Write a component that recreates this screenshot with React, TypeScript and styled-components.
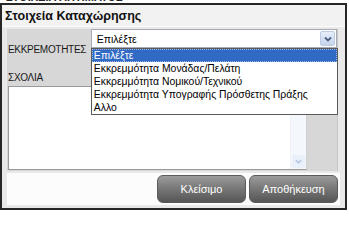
import React from "react"
import styled, { createGlobalStyle } from "styled-components"

const GlobalStyle = createGlobalStyle`
  html, body {
    margin: 0;
    padding: 0;
    background: #ffffff;
  }
  body {
    font-family: "Liberation Sans", Arial, sans-serif;
    font-size: 11px;
    color: #000;
  }
`

const Page = styled.div`
  width: 349px;
  height: 212px;
  overflow: hidden;
  background: #ffffff;
`

const BehindStrip = styled.div`
  height: 3px;
  overflow: hidden;
  padding-left: 6px;
  font-size: 11px;
  font-weight: bold;
  color: #222;
  line-height: 12px;

  & > span {
    display: block;
    margin-top: -9px;
  }
`

const Dialog = styled.div`
  width: 343px;
  height: 203px;
  border: 2px solid #262626;
  background: #e9e9e9;
  display: flex;
  flex-direction: column;
`

const TitleBar = styled.div`
  height: 21px;
  padding-left: 3px;
  display: flex;
  align-items: center;
  background: #f2f2f2;
  border-bottom: 1px solid #fbfbfb;
  font-size: 12.5px;
  font-weight: bold;
  color: #111;
`

const Body = styled.div`
  padding: 2px 0 0 5px;
  display: flex;
  flex-direction: column;
`

const Form = styled.div`
  width: 330px;
  height: 142px;
  background: #d7d7d7;
  border-right: 1px solid #c6c6c6;
  display: flex;
  flex-direction: column;
`

const Row = styled.div<{ $height: number }>`
  height: ${({ $height }) => $height}px;
  display: flex;
  align-items: flex-start;
  gap: 2px;
`

const Label = styled.div<{ $top: number; $width?: number }>`
  width: ${({ $width }) => $width ?? 81}px;
  padding-top: ${({ $top }) => $top}px;
  padding-left: 1px;
  font-size: 10px;
  letter-spacing: -0.3px;
  color: #1a1a1a;
  white-space: nowrap;
`

const SelectWrap = styled.div`
  position: relative;
  width: 247px;
`

const SelectBox = styled.div`
  box-sizing: border-box;
  height: 19px;
  background: #ffffff;
  border: 1px solid #a5acb5;
  display: flex;
  align-items: center;
  justify-content: space-between;
  padding: 0 1px 0 5px;
`

const SelectValue = styled.span`
  font-size: 10.5px;
`

const ArrowButton = styled.div`
  width: 15px;
  height: 15px;
  box-sizing: border-box;
  border: 1px solid #bccbe3;
  border-radius: 2px;
  background: linear-gradient(#e6eefb, #c5d3ea);
  display: flex;
  align-items: center;
  justify-content: center;
`

const DropList = styled.ul`
  position: absolute;
  top: 19px;
  left: 0;
  z-index: 2;
  box-sizing: border-box;
  width: 247px;
  margin: 0;
  padding: 0;
  list-style: none;
  background: #ffffff;
  border: 1px solid #5a5a5a;
`

const DropItem = styled.li<{ $active?: boolean }>`
  height: 13px;
  line-height: 13px;
  padding-left: 2px;
  font-size: 10.4px;
  white-space: nowrap;
  color: ${({ $active }) => ($active ? "#ffffff" : "#000")};
  background: ${({ $active }) => ($active ? "#316ac5" : "transparent")};
  outline: ${({ $active }) => ($active ? "1px dotted #9fb9e6" : "none")};
  outline-offset: -1px;
`

const CommentBox = styled.div`
  margin-left: 1px;
  width: 299px;
  height: 84px;
  box-sizing: border-box;
  background: #ffffff;
  border: 1px solid #9a9a9a;
  border-right-color: #cfcfcf;
  display: flex;
  justify-content: flex-end;
`

const ScrollTrack = styled.div`
  width: 15px;
  background: #f4f7fc;
  border-left: 1px solid #eef1f7;
  display: flex;
  flex-direction: column;
  justify-content: flex-end;
  align-items: center;
  padding-bottom: 1px;
`

const ScrollArrow = styled.div`
  width: 13px;
  height: 13px;
  background: #eaf0fa;
  border-radius: 2px;
  display: flex;
  align-items: center;
  justify-content: center;
`

const Footer = styled.div`
  margin-top: 2px;
  width: 333px;
  height: 32px;
  background: #fcfcfc;
  display: flex;
  align-items: center;
  justify-content: flex-end;
  gap: 3px;
  padding-right: 2px;
  box-sizing: border-box;
`

const Button = styled.button`
  width: 89px;
  height: 28px;
  border: 1px solid #5b5b5b;
  border-radius: 6px;
  background: linear-gradient(#9c9c9c 0%, #7a7a7a 45%, #555555 100%);
  color: #ffffff;
  font-family: "Liberation Sans", Arial, sans-serif;
  font-size: 11px;
  padding: 0;
  cursor: pointer;
`

const Chevron: React.FC<{ color: string; size: number }> = ({ color, size }) => (
  <svg width={size} height={size} viewBox="0 0 10 10">
    <path d="M2 3.5 L5 6.5 L8 3.5" fill="none" stroke={color} strokeWidth={1.8} />
  </svg>
)

const options = [
  "Επιλέξτε",
  "Εκκρεμμότητα Μονάδας/Πελάτη",
  "Εκκρεμμότητα Νομικού/Τεχνικού",
  "Εκκρεμμότητα Υπογραφής Πρόσθετης Πράξης",
  "Αλλο",
]

export default function App() {
  return (
    <>
      <GlobalStyle />
      <Page>
        <BehindStrip>
          <span>ΣΤΟΙΧΕΙΑ ΑΙΤΗΜΑΤΟΣ</span>
        </BehindStrip>
        <Dialog>
          <TitleBar>Στοιχεία Καταχώρησης</TitleBar>
          <Body>
            <Form>
              <Row $height={34}>
                <Label $top={15}>ΕΚΚΡΕΜΟΤΗΤΕΣ</Label>
                <SelectWrap>
                  <SelectBox>
                    <SelectValue>Επιλέξτε</SelectValue>
                    <ArrowButton>
                      <Chevron color="#4d6185" size={10} />
                    </ArrowButton>
                  </SelectBox>
                  <DropList>
                    {options.map((o, i) => (
                      <DropItem key={o} $active={i === 0}>
                        {o}
                      </DropItem>
                    ))}
                  </DropList>
                </SelectWrap>
              </Row>
              <Row $height={23}>
                <Label $top={9} $width={120}>ΣΧΟΛΙΑ</Label>
              </Row>
              <CommentBox>
                <ScrollTrack>
                  <ScrollArrow>
                    <Chevron color="#b9c8e2" size={9} />
                  </ScrollArrow>
                </ScrollTrack>
              </CommentBox>
            </Form>
            <Footer>
              <Button>Κλείσιμο</Button>
              <Button>Αποθήκευση</Button>
            </Footer>
          </Body>
        </Dialog>
      </Page>
    </>
  )
}
